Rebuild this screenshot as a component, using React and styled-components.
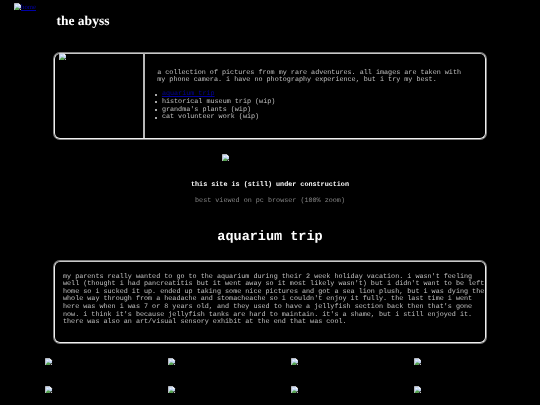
import React from "react";
import styled, { createGlobalStyle } from "styled-components";

const GlobalStyle = createGlobalStyle`
  * { box-sizing: border-box; }
  body {
    margin: 0;
    background: #000;
    color: #c0c0c0;
    font: 6.75px/7.65px "Liberation Mono", "Courier New", monospace;
    text-rendering: geometricPrecision;
    overflow: hidden;
  }
`;

const Page = styled.div`
  height: 405px;
  overflow: hidden;
  will-change: transform;
`;

const Header = styled.header`
  display: flex;
  height: 52px;
  padding: 3px 0 0 13.5px;
`;

const HomeLink = styled.a`
  display: flex;
  align-items: flex-start;
  width: 43px;
  height: 8px;
  color: #0000a8;
  font-family: "Liberation Serif", "Times New Roman", serif;
  text-decoration: none;
`;

const LinkLabel = styled.span`
  padding-top: 1px;
  text-decoration: underline;
`;

const SiteTitle = styled.h1`
  margin: 10px 0 0;
  color: #fff;
  font: bold 13.5px/16px "Liberation Serif", "Times New Roman", serif;
`;

const Panel = styled.section`
  display: flex;
  width: 432px;
  height: ${(p) => p.$height}px;
  margin: 1px 0 0 54px;
  border: 1px solid #f0f0f0;
  border-top-color: #c8c8c8;
  border-radius: 6px;
  box-shadow: 0 0 0 1px #808080;
`;

const Portrait = styled.div`
  width: 90px;
  margin-top: -1px;
  padding: 0 0 0 3.5px;
  border-right: 2px solid #b8b8b8;
`;

const Intro = styled.div`
  padding: 15.5px 0 0 12.2px;
`;

const Paragraph = styled.p`
  margin: 0;
  white-space: pre;
`;

const TripList = styled.ul`
  margin: 6.6px 0 0;
  padding: 0 0 0 4.7px;
  list-style: none;
`;

const Trip = styled.li`
  display: flex;
  align-items: center;
  height: 7.7px;
  &::before {
    content: "";
    width: 2px;
    height: 2px;
    margin: 0 5px 1px -7px;
    border-radius: 1px;
    background: #ddd;
  }
`;

const TripLink = styled.a`
  color: #00009c;
  text-decoration: underline;
`;

const Notice = styled.section`
  height: 121px;
  padding-top: 15px;
  text-align: center;
`;

const Banner = styled.div`
  display: flex;
  margin-left: 221.5px;
`;

const Status = styled.p`
  margin: 20px 0 0;
  color: #fff;
  font-weight: bold;
`;

const Advice = styled.p`
  margin: 9px 0 0;
  color: #858585;
`;

const SectionTitle = styled.h2`
  margin: 24px 0 0;
  color: #fff;
  font-size: 13.5px;
  line-height: 15px;
`;

const Story = styled(Paragraph)`
  padding: 11.5px 0 0 8px;
`;

const Gallery = styled.div`
  display: grid;
  grid-template-columns: repeat(4, 122.8px);
  row-gap: 20px;
  padding: 15px 0 0 45.4px;
`;

const IconShape = styled.svg`
  display: block;
  flex: none;
  width: 7.5px;
  height: 7.5px;
`;

function BrokenImage() {
  return (
    <IconShape viewBox="0 0 16 16" aria-hidden="true">
      <path d="M1 1h9l5 5v4l-4 2-2 3H1z" fill="#c3d5f2" />
      <path d="M1 1h9l5 5M1 1v14" fill="none" stroke="#d8d8d8" strokeWidth="1.6" />
      <path d="M2 13l4-4 4 1 2 1-3 4H2z" fill="#55a34e" />
      <path d="M10 1v5h5z" fill="#fff" />
      <path d="M3 6q0-2 2-2t3 2z" fill="#fff" />
      <path d="M12 14l3-3v4h-3z" fill="#c0c0c0" />
    </IconShape>
  );
}

const trips = ["historical museum trip (wip)", "grandma's plants (wip)", "cat volunteer work (wip)"];

const intro = `a collection of pictures from my rare adventures. all images are taken with
my phone camera. i have no photography experience, but i try my best.`;

const story = `my parents really wanted to go to the aquarium during their 2 week holiday vacation. i wasn't feeling
well (thought i had pancreatitis but it went away so it most likely wasn't) but i didn't want to be left
home so i sucked it up. ended up taking some nice pictures and got a sea lion plush, but i was dying the
whole way through from a headache and stomacheache so i couldn't enjoy it fully. the last time i went
here was when i was 7 or 8 years old, and they used to have a jellyfish section back then that's gone
now. i think it's because jellyfish tanks are hard to maintain. it's a shame, but i still enjoyed it.
there was also an art/visual sensory exhibit at the end that was cool.`;

export default function App() {
  return (
    <Page>
      <GlobalStyle />
      <Header>
        <HomeLink href="#"><BrokenImage /><LinkLabel>home</LinkLabel></HomeLink>
        <SiteTitle>the abyss</SiteTitle>
      </Header>
      <Panel $height={86}>
        <Portrait><BrokenImage /></Portrait>
        <Intro>
          <Paragraph>{intro}</Paragraph>
          <TripList>
            <Trip><TripLink href="#trip">aquarium trip</TripLink></Trip>
            {trips.map((trip) => <Trip key={trip}>{trip}</Trip>)}
          </TripList>
        </Intro>
      </Panel>
      <Notice>
        <Banner><BrokenImage /></Banner>
        <Status>this site is (still) under construction</Status>
        <Advice>best viewed on pc browser (100% zoom)</Advice>
        <SectionTitle id="trip">aquarium trip</SectionTitle>
      </Notice>
      <Panel $height={82}>
        <Story>{story}</Story>
      </Panel>
      <Gallery>
        {Array.from({ length: 8 }, (_, i) => <BrokenImage key={i} />)}
      </Gallery>
    </Page>
  );
}
